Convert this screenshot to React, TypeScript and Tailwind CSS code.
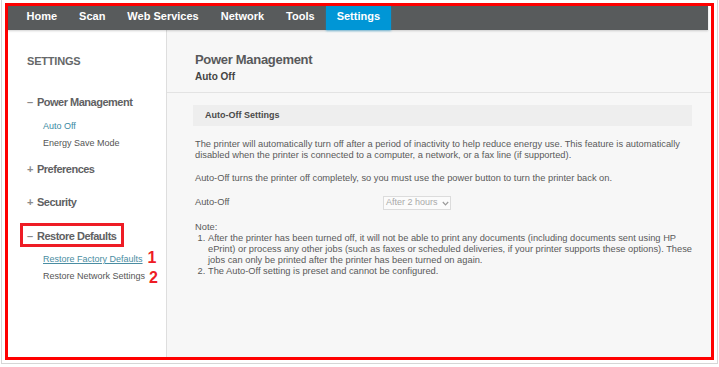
import React from "react";

const SANS = "font-['Liberation_Sans',Arial,sans-serif]";

function Head({ sign, label }: { sign: string; label: string }) {
  return (
    <div className={`${SANS} flex items-baseline text-[11px] leading-[15px] font-bold tracking-[-0.5px] text-[#5f6163]`}>
      <span className="w-[10px] shrink-0 text-[#8a8a8a] tracking-normal">{sign}</span>
      <span>{label}</span>
    </div>
  );
}

function SubItem({ children, className = "" }: { children: React.ReactNode; className?: string }) {
  return <div className={`${SANS} text-[9px] leading-[17px] whitespace-nowrap ${className}`}>{children}</div>;
}

export default function App() {
  const nav = ["Home", "Scan", "Web Services", "Network", "Tools"];
  return (
    <div className="w-[719px] h-[367px] bg-white pl-[1px]">
      <div className="w-[717px] h-[364px] border-x border-b border-[#d6d6d6] pt-[3px] px-[3px] pb-[3px]">
        <div className="h-full border-[3px] border-[#ff0000] flex flex-col">
          {/* top navigation */}
          <nav className={`${SANS} relative z-10 h-[24px] mr-[3px] bg-[#585b5c] flex pl-[7.5px] shadow-[0_1px_2px_rgba(0,0,0,0.18)]`}>
            {nav.map((n) => (
              <div key={n} className="px-[11px] text-[11px] leading-[20px] font-bold text-white">
                {n}
              </div>
            ))}
            <div className="px-[11px] bg-[#0096d6] text-[11px] leading-[20px] font-bold text-white shadow-[0_1px_2px_rgba(0,150,214,0.45)]">
              Settings
            </div>
          </nav>

          <div className="flex flex-1 min-h-0 mr-[3px]">
            {/* sidebar */}
            <aside className="w-[159px] shrink-0 bg-white border-r border-[#dedede] pl-[19px] pt-[24px]">
              <div className={`${SANS} text-[11px] leading-[15px] font-bold tracking-[-0.2px] text-[#666869]`}>SETTINGS</div>

              <div className="mt-[26px]">
                <Head sign="–" label="Power Management" />
                <div className="mt-[8px] pl-[16px]">
                  <SubItem className="text-[#3a8aa3]">Auto Off</SubItem>
                  <SubItem className="text-[#555]">Energy Save Mode</SubItem>
                </div>
              </div>

              <div className="mt-[10px]">
                <Head sign="+" label="Preferences" />
              </div>

              <div className="mt-[18px]">
                <Head sign="+" label="Security" />
              </div>

              <div className="mt-[19px]">
                <div className="relative">
                  <Head sign="–" label="Restore Defaults" />
                  <div className="absolute left-[-7px] top-[-6px] w-[104px] h-[24px] border-[3px] border-[#ee1c25]" />
                </div>
                <div className="mt-[7px] pl-[16px]">
                  <SubItem className="text-[#4a8da2]">
                    <span className="relative">
                      <span className="underline underline-offset-[1px]">Restore Factory Defaults</span>
                      <span className={`${SANS} absolute left-full ml-[5px] top-[-4px] text-[16px] leading-[16px] font-bold text-[#ee1c25]`}>1</span>
                    </span>
                  </SubItem>
                  <SubItem className="text-[#555]">
                    <span className="relative">
                      Restore Network Settings
                      <span className={`${SANS} absolute left-full ml-[4px] top-[-1px] text-[16px] leading-[16px] font-bold text-[#ee1c25]`}>2</span>
                    </span>
                  </SubItem>
                </div>
              </div>
            </aside>

            {/* main content */}
            <main className="flex-1 bg-[#f7f7f7]">
              <div className="pl-[28px] pt-[21px] pb-[8px] border-b border-[#e3e3e3]">
                <div className={`${SANS} text-[13px] leading-[18px] font-bold tracking-[-0.3px] text-[#58595b]`}>Power Management</div>
                <div className={`${SANS} mt-[1px] text-[10px] leading-[14px] font-bold text-[#444]`}>Auto Off</div>
              </div>

              <div className={`${SANS} pl-[26px] pr-[19px] pt-[12px] text-[#5a5a5a]`}>
                <div className="h-[21px] bg-[#eeeeee] pl-[12px] flex items-center text-[9px] font-bold text-[#4a4a4a]">
                  Auto-Off Settings
                </div>

                <p className="mt-[13px] pl-[2px] text-[9.3px] leading-[11px] whitespace-nowrap">
                  The printer will automatically turn off after a period of inactivity to help reduce energy use. This feature is automatically
                  <br />
                  disabled when the printer is connected to a computer, a network, or a fax line (if supported).
                </p>

                <p className="mt-[12px] pl-[2px] text-[9.3px] leading-[11px] whitespace-nowrap">
                  Auto-Off turns the printer off completely, so you must use the power button to turn the printer back on.
                </p>

                <div className="mt-[12px] pl-[2px] h-[14px] flex items-center">
                  <div className="w-[188px] text-[9.3px]">Auto-Off</div>
                  <div className="w-[68px] h-[14px] border border-[#dcdcdc] bg-[#fbfbfb] flex items-center pl-[2px] text-[9px] text-[#a9a9a9]">
                    <span>After 2 hours</span>
                    <svg className="ml-[4px]" width="7" height="5" viewBox="0 0 7 5" fill="none">
                      <path d="M0.8 1 L3.5 3.8 L6.2 1" stroke="#9a9a9a" strokeWidth="1.2" />
                    </svg>
                  </div>
                </div>

                <div className="mt-[12px] pl-[2px] text-[9.3px] leading-[11px] whitespace-nowrap">
                  <div>Note:</div>
                  <div className="flex">
                    <span className="w-[13px] pl-[2.5px] shrink-0">1.</span>
                    <span>
                      After the printer has been turned off, it will not be able to print any documents (including documents sent using HP
                      <br />
                      ePrint) or process any other jobs (such as faxes or scheduled deliveries, if your printer supports these options). These
                      <br />
                      jobs can only be printed after the printer has been turned on again.
                    </span>
                  </div>
                  <div className="flex">
                    <span className="w-[13px] pl-[2.5px] shrink-0">2.</span>
                    <span>The Auto-Off setting is preset and cannot be configured.</span>
                  </div>
                </div>
              </div>
            </main>
          </div>
        </div>
      </div>
    </div>
  );
}
